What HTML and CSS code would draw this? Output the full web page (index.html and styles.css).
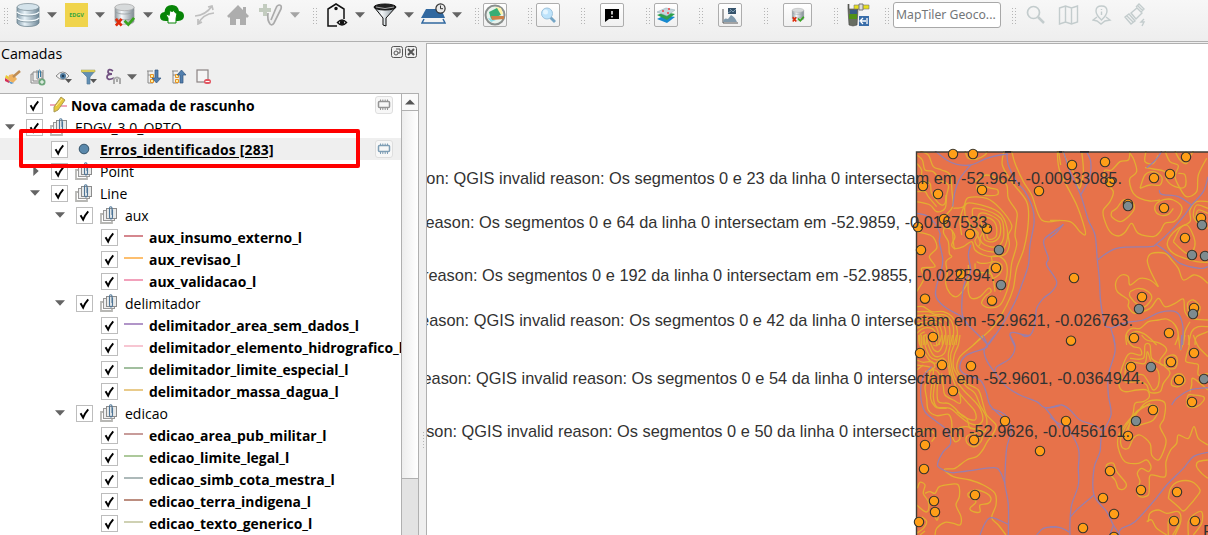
FILE: index.html
```html
<!DOCTYPE html>
<html lang="pt">
<head>
<meta charset="utf-8">
<title>QGIS</title>
<link rel="stylesheet" href="styles.css">
</head>
<body>
<svg class="defs" width="0" height="0">
  <linearGradient id="metal" x1="0" x2="1"><stop offset="0" stop-color="#8b979d"/><stop offset=".35" stop-color="#f5f8fa"/><stop offset="1" stop-color="#7d8a92"/></linearGradient>
  <linearGradient id="steel" x1="0" x2="1"><stop offset="0" stop-color="#839baa"/><stop offset=".35" stop-color="#e7f2f8"/><stop offset="1" stop-color="#6e8797"/></linearGradient>
  <symbol id="down" viewBox="0 0 10 6"><path d="M0 .3h10L5 5.7z" fill="#646464"/></symbol>
  <symbol id="right" viewBox="0 0 6 10"><path d="M.3 0v10L5.7 5z" fill="#646464"/></symbol>
  <symbol id="check" viewBox="0 0 16 16"><path d="M3.8 7.8 6.500 12.400Q8.500 7.500 12 3.600" fill="none" stroke="#000" stroke-width="2.1"/></symbol>
  <symbol id="group" viewBox="0 0 18 18"><path d="M3 8H1v9h11v-2" fill="none" stroke="#b7b7b4" stroke-width="1.800"/><rect x="3.500" y="4.500" width="11" height="10" fill="#eee" stroke="#999"/><rect x="6.500" y="2.500" width="10" height="10" fill="#e8eaea" stroke="#8c8c8c"/><path d="M12.500 3.500v7q0 2.500-1.500 2.500T9.500 10.500v-8Q9.500.7 10.700.7T12 2v7" fill="none" stroke="#4d7496" stroke-width="1.100"/></symbol>
  <symbol id="chip" viewBox="0 0 18 18"><rect x=".5" y=".5" width="17" height="17" rx="2.500" fill="#f7f7f7" stroke="#dedede"/><g fill="none" stroke="currentColor"><rect x="3.500" y="5.500" width="11" height="6" rx="1" stroke-width="1.500"/><path d="M5.500 3.500v2m2.300-2v2m2.400-2v2m2.300-2v2M5.500 12v2m2.300-2v2m2.400-2v2m2.300-2v2"/></g></symbol>
  <symbol id="db" viewBox="0 0 24 24"><path d="M1 4v16q2 3.500 11 3.500T23 20V4z" fill="url(#steel)" stroke="#708591" stroke-width=".8"/><path d="M1 9q2 3 11 3t11-3M1 15q2 3 11 3t11-3" fill="none" stroke="#f4fafc" stroke-width="1.600"/><path d="M1 10q2 3 11 3t11-3M1 16q2 3 11 3t11-3" fill="none" stroke="#718894" stroke-width=".8"/><ellipse cx="12" cy="4" rx="11" ry="3.500" fill="#d4e3eb" stroke="#82939c" stroke-width=".8"/></symbol>
  <symbol id="dbx" viewBox="0 0 24 24"><path d="M2 4v15q2 3 10 3t10-3V4z" fill="url(#metal)" stroke="#aaa" stroke-width=".6"/><path d="M2 8q2 3 10 3t10-3M2 14q2 3 10 3t10-3" fill="none" stroke="#969c9e" stroke-width=".8"/><ellipse cx="12" cy="4" rx="10" ry="3.500" fill="#d7dadb" stroke="#aaa" stroke-width=".8"/><path d="m3 16 6 7m0-7-6 7" stroke="#df2c0b" stroke-width="2.800"/><path d="m12 18 4 4 6-7" fill="none" stroke="#37a51d" stroke-width="2.800"/></symbol>
</svg>

<header class="toolbar">
  <i class="handle ml3"></i>
  <svg class="ml8" width="24" height="24"><use href="#db"/></svg>
  <svg class="ml7" width="10" height="6"><use href="#down"/></svg>
  <span class="edgv ml8">EDGV</span>
  <svg class="ml7" width="10" height="6"><use href="#down"/></svg>
  <svg class="ml8" width="23" height="24"><use href="#dbx"/></svg>
  <svg class="ml7" width="10" height="6"><use href="#down"/></svg>
  <svg class="ml7" width="24" height="20" viewBox="0 0 24 20"><path d="M6 16Q0 16 0 11.500 0 7.500 4.500 7 5 0 12 0q6 0 7 6 5 .5 5 5t-6 5z" fill="#078407"/><path d="M8 18v-5l-2-3 2-.5 1 1 1-5 2 1 2-1 1 2 2 1-1 5v4.500z" fill="#fff" stroke="#078407"/></svg>
  <svg class="ml11" width="20" height="20" viewBox="0 0 20 20" fill="none" stroke="#bfbfbf" stroke-width="1.700"><path d="M0 11Q11 10 17 1m-4 1 4-1 1 4M3 19Q8 9 19 8M3 14v5l4-2"/></svg>
  <svg class="ml12" width="22" height="22" viewBox="0 0 22 22"><path d="M11 1 0 12l2 2 1-1v8h6v-6h4v6h6v-8l1 1 2-2-3-3V3h-3v3z" fill="#adadad"/></svg>
  <svg class="ml10" width="25" height="24" viewBox="0 0 25 24"><path d="M4 1h4v4h4v4H8v4H4V9H0V5h4z" fill="#c3ccbf"/><path d="M9 10Q8 17 11 21q2 2 4-1l7-14q1-4-1.500-4T17 5l-5 12" fill="#eee" stroke="#aaa" stroke-width="1.700"/></svg>
  <svg class="ml6 dim" width="10" height="6"><use href="#down"/></svg>
  <i class="handle ml12"></i>
  <svg class="ml9" width="22" height="24" viewBox="0 0 22 24" fill="none" stroke="#111" stroke-width="1.500"><path d="M11 23H2V6l8-5 8 5v10"/><circle cx="10" cy="5.500" r="1" fill="#111"/><path d="M11.500 19.500q4.500-5 9 0-4.500 5-9 0z" fill="#fff"/><circle cx="16" cy="19.500" r="1.500" fill="#111"/></svg>
  <svg class="ml7" width="10" height="6"><use href="#down"/></svg>
  <svg class="ml8" width="24" height="24" viewBox="0 0 24 24"><path d="m1 4 9 11v7l3 1v-8L23 4z" fill="url(#metal)" stroke="#111"/><ellipse cx="12" cy="4" rx="11" ry="3" fill="#222" stroke="#111"/><path d="M3 4q9 3 18 0" stroke="#aaa" fill="none"/></svg>
  <svg class="ml7" width="10" height="6"><use href="#down"/></svg>
  <svg class="ml7" width="25" height="24" viewBox="0 0 25 24"><path d="M5 6h15l4 9H0z" fill="#31689f"/><path d="m3 16-2 4h23l-2-4" fill="none" stroke="#31689f" stroke-width="1.500"/><circle cx="19.500" cy="5.500" r="4.600" fill="#e9e9e9" stroke="#333" stroke-width="1.200"/><path d="M19.500 2.500v3.200h2.500" fill="none" stroke="#333"/></svg>
  <svg class="ml6" width="10" height="6"><use href="#down"/></svg>
  <i class="handle ml12"></i>
  <span class="tool ml4"><svg width="22" height="22" viewBox="0 0 22 22"><circle cx="11" cy="11" r="9.500" fill="#e8f3ed" stroke="#8a8f8d" stroke-width="2"/><path d="m11 3 6 1 2 6-3 1z" fill="#fff2a7"/><path d="m5 8 8-4 4 7-10 4z" fill="#36ad75"/><path d="m4 14 3 4 5-2z" fill="#8bdde7"/><path d="m7 12 13 0v3l-12 1z" fill="#cc8149"/></svg></span>
  <i class="handle ml20"></i>
  <span class="tool ml4"><svg width="18" height="18" viewBox="0 0 18 18"><path d="m11 11 5 5" stroke="#75a5c5" stroke-width="2.800"/><circle cx="8" cy="7.500" r="5.500" fill="#bde3fb" stroke="#9fc3dc"/><circle cx="6.500" cy="6" r="2.500" fill="#e4f5ff"/></svg></span>
  <i class="handle ml20"></i>
  <span class="tool ml15"><svg width="14" height="14" viewBox="0 0 14 14"><path d="M0 1h14v10H4l-4 3z" fill="#000"/><path d="M7 3v3.500M7 8v1.500" stroke="#fff" stroke-width="1.500"/></svg></span>
  <i class="handle ml21"></i>
  <span class="tool ml4"><svg width="20" height="18" viewBox="0 0 20 18"><path d="m1 13 8-4 10 2-8 6z" fill="#1688ce"/><path d="m1 9 8-3 10 2-8 6z" fill="#2da04b"/><path d="m1 6 9-4 9 2-8 6z" fill="#c5d5dc" stroke="#8ca4b0" stroke-width=".5"/><path d="M6 5h2m4-2h2m-3 4h2" stroke="#e44" stroke-width="1.500"/></svg></span>
  <i class="handle ml20"></i>
  <span class="tool ml15"><svg width="16" height="18" viewBox="0 0 16 18"><path d="M1 3v14h15" fill="none" stroke="#555"/><path d="M1 16q1-5 5-3l3-4q4 2 6 7z" fill="#829bad"/><path d="M6 2h8v6H6z" fill="#36536b"/><path d="m8 3 3 3 3-3M6 7l3-2" stroke="#7d9bb1" fill="none"/></svg></span>
  <i class="handle ml21"></i>
  <span class="tool wide ml15"><svg width="14" height="16"><use href="#dbx"/></svg></span>
  <i class="handle ml21"></i>
  <svg class="ml9" width="23" height="24" viewBox="0 0 23 24"><path d="M2 1v5h9l-1 16-4 1-4-1L1 6V1" fill="#686d62" stroke="#444" stroke-width=".6"/><path d="M3 7h7v4H3z" fill="#375b89"/><path d="M2 11h8v5H2z" fill="#509118"/><path d="M7 2h15v4H7z" fill="#e6df1d" stroke="#777" stroke-width=".6"/><path d="M12 1h4v6h-4z" fill="#ddd" stroke="#777"/><path d="M12 13h10v10H12z" fill="#396da9"/><path d="M20 15v6m-1-3h-5m2-3-3 3 3 3" stroke="#fff" fill="none" stroke-width="1.300"/></svg>
  <i class="handle ml14"></i>
  <span class="search ml4">MapTiler Geoco...</span>
  <i class="handle ml10"></i>
  <svg class="ml10 pale" width="20" height="20" viewBox="0 0 20 20"><circle cx="7.500" cy="7.500" r="6" stroke-width="1.700"/><path d="m12 12 6 6" stroke-width="2.500"/></svg>
  <svg class="ml12 pale" width="22" height="20" viewBox="0 0 22 20"><path d="m1.500 3 6-2 6 2 6-2v16l-6 2-6-2-6 2zm6-2v16m6-14v16"/></svg>
  <svg class="ml12 pale" width="20" height="20" viewBox="0 0 20 20"><path d="M9.500 15Q4 10 4 6q0-5 5.500-5T15 6q0 4-5.500 9zM9.500 4v1m0 1.500V10M5 12l-4 3 4 1 4 3 4-3 5-1-4-3"/></svg>
  <svg class="ml12 pale" width="24" height="24" viewBox="0 0 24 24"><path d="m7 10 6-5 5 5-6 6zM12 4l3-3 5 5-3 3M1 14l4-3 6 7-4 3zm2-1 6 6M14 3l5 5M20 16l-3 3h3l-2 4"/></svg>
</header>

<main class="workspace">
  <aside class="panel">
    <div class="title"><span>Camadas</span>
      <svg width="12" height="12" viewBox="0 0 12 12" fill="none" stroke="#555"><rect x=".5" y=".5" width="11" height="11" rx="2"/><circle cx="5" cy="7" r="2"/><path d="M5 3h4v4H7"/></svg>
      <svg width="12" height="12" viewBox="0 0 12 12" fill="none" stroke="#555"><rect x=".5" y=".5" width="11" height="11" rx="2"/><path d="m3 3 6 6m0-6L3 9" stroke-width="2"/></svg>
    </div>
    <div class="actions">
      <svg class="ml5" width="17" height="16" viewBox="0 0 17 16"><path d="m1 6 5 3-2 2-4-2z" fill="#e9cb36"/><path d="m0 9 5 3-1 2-4-2z" fill="#d62f58"/><path d="m4 6 4-1 4 5-4 4-5-3z" fill="#efb25f"/><path d="m8 8 7-6" stroke="#bf8d53" stroke-width="2.500"/><path d="m3 12 6 2-3 1z" fill="#5794cb"/></svg>
      <svg class="ml8" width="16" height="17" viewBox="0 0 16 17"><path d="M3 5H1v9h8M5 3H3v9h9V3H5M7 1v9h6V1" fill="none" stroke="#888"/><path d="M8.500 9V3q0-2 1-2t1 2v5" fill="none" stroke="#397ba2"/><circle cx="12" cy="13" r="3.500" fill="#6fa77c"/><path d="M12 11v4m-2-2h4" stroke="#fff"/></svg>
      <svg class="ml9" width="18" height="16" viewBox="0 0 18 16"><path d="M1 7q7-8 13 0-6 7-13 0z" fill="#f3f3f3" stroke="#888"/><circle cx="8" cy="7" r="3" fill="#4d799e"/><circle cx="8" cy="7" r="1.200" fill="#203c55"/><path d="M10 10h7l-3.500 4z" fill="#555"/></svg>
      <svg class="ml8" width="17" height="16" viewBox="0 0 17 16"><path d="M0 2h14L9 8v7H6V8z" fill="#6290b5" stroke="#557b98" stroke-width=".7"/><path d="M0 1h14v2H0z" fill="#eedb50" stroke="#8f925f" stroke-width=".5"/><path d="M9 10h7l-3.500 4z" fill="#555"/></svg>
      <svg class="ml8" width="16" height="18" viewBox="0 0 16 18"><path d="M7 3Q2 0 2 4q0 2 4 2-5 0-5 3 0 4 7 1" fill="none" stroke="#715080" stroke-width="1.800"/><path d="M8 16v-5q3-3 6 0v5m-3-5v3" fill="none" stroke="#aaa" stroke-width="2"/></svg>
      <svg class="ml5" width="10" height="6"><use href="#down"/></svg>
      <svg class="ml9" width="16" height="16" viewBox="0 0 16 16"><path d="M1 2h6M2 2v12h5M2 6h3" fill="none" stroke="#888"/><path d="M4.500 5.500h3v3h-3zm0 5h3v3h-3z" fill="#fff2a0" stroke="#e79227"/><path d="M9 1h3v8h3l-4.500 5L6 9h3z" fill="#527fae" stroke="#31557c" stroke-width=".7"/></svg>
      <svg class="ml9" width="16" height="16" viewBox="0 0 16 16"><path d="M1 2h6M2 2v12h5M2 6h3" fill="none" stroke="#888"/><path d="M4.500 5.500h3v3h-3zm0 5h3v3h-3z" fill="#fff2a0" stroke="#e79227"/><path d="M9 14h3V6h3l-4.500-5L6 6h3z" fill="#527fae" stroke="#31557c" stroke-width=".7"/></svg>
      <svg class="ml9" width="16" height="16" viewBox="0 0 16 16"><rect x="1" y="1" width="11" height="12" fill="#f5f5f5" stroke="#8b8383" stroke-width="1.200"/><rect x="8" y="10" width="7" height="5" rx="2.500" fill="#e25661"/><path d="M9.500 12.500h4" stroke="#fff"/></svg>
    </div>
    <div class="treebox">
      <div class="tree">
        <div class="row layer"><i class="fold"></i><svg class="cb"><use href="#check"/></svg><svg class="ic" viewBox="0 0 18 18"><path d="M0 9h5l3-2 3 3h6" fill="none" stroke="#ea8ba7" stroke-width="1.500"/><path d="m4 11 7-10 4 3-7 10-4 2z" fill="#e7c83d" stroke="#a99955"/><path d="m6 10 6-7" stroke="#fff0a0"/></svg><b class="near">Nova camada de rascunho</b><svg class="chip"><use href="#chip"/></svg></div>
        <div class="row"><i class="fold"><svg width="10" height="6"><use href="#down"/></svg></i><svg class="cb"><use href="#check"/></svg><svg class="ic"><use href="#group"/></svg><span>EDGV_3.0_ORTO</span></div>
        <div class="row l1 selected"><i class="fold"></i><svg class="cb"><use href="#check"/></svg><svg class="ic" viewBox="0 0 18 18"><circle cx="9" cy="9" r="4.800" fill="#5a88ab" stroke="#35546b"/></svg><b class="current">Erros_identificados [283]</b><svg class="chip blue"><use href="#chip"/></svg></div>
        <div class="row l1"><i class="fold"><svg class="closed" width="6" height="10"><use href="#right"/></svg></i><svg class="cb"><use href="#check"/></svg><svg class="ic"><use href="#group"/></svg><span>Point</span></div>
        <div class="row l1"><i class="fold"><svg width="10" height="6"><use href="#down"/></svg></i><svg class="cb"><use href="#check"/></svg><svg class="ic"><use href="#group"/></svg><span>Line</span></div>
        <div class="row l2"><i class="fold"><svg width="10" height="6"><use href="#down"/></svg></i><svg class="cb"><use href="#check"/></svg><svg class="ic"><use href="#group"/></svg><span>aux</span></div>
        <div class="row l3"><i class="fold"></i><svg class="cb"><use href="#check"/></svg><i class="line c1"></i><b>aux_insumo_externo_l</b></div>
        <div class="row l3"><i class="fold"></i><svg class="cb"><use href="#check"/></svg><i class="line c2"></i><b>aux_revisao_l</b></div>
        <div class="row l3"><i class="fold"></i><svg class="cb"><use href="#check"/></svg><i class="line c3"></i><b>aux_validacao_l</b></div>
        <div class="row l2"><i class="fold"><svg width="10" height="6"><use href="#down"/></svg></i><svg class="cb"><use href="#check"/></svg><svg class="ic"><use href="#group"/></svg><span>delimitador</span></div>
        <div class="row l3"><i class="fold"></i><svg class="cb"><use href="#check"/></svg><i class="line c4"></i><b>delimitador_area_sem_dados_l</b></div>
        <div class="row l3"><i class="fold"></i><svg class="cb"><use href="#check"/></svg><i class="line c5"></i><b>delimitador_elemento_hidrografico_l</b></div>
        <div class="row l3"><i class="fold"></i><svg class="cb"><use href="#check"/></svg><i class="line c6"></i><b>delimitador_limite_especial_l</b></div>
        <div class="row l3"><i class="fold"></i><svg class="cb"><use href="#check"/></svg><i class="line c7"></i><b>delimitador_massa_dagua_l</b></div>
        <div class="row l2"><i class="fold"><svg width="10" height="6"><use href="#down"/></svg></i><svg class="cb"><use href="#check"/></svg><svg class="ic"><use href="#group"/></svg><span>edicao</span></div>
        <div class="row l3"><i class="fold"></i><svg class="cb"><use href="#check"/></svg><i class="line c8"></i><b>edicao_area_pub_militar_l</b></div>
        <div class="row l3"><i class="fold"></i><svg class="cb"><use href="#check"/></svg><i class="line c9"></i><b>edicao_limite_legal_l</b></div>
        <div class="row l3"><i class="fold"></i><svg class="cb"><use href="#check"/></svg><i class="line c10"></i><b>edicao_simb_cota_mestra_l</b></div>
        <div class="row l3"><i class="fold"></i><svg class="cb"><use href="#check"/></svg><i class="line c11"></i><b>edicao_terra_indigena_l</b></div>
        <div class="row l3"><i class="fold"></i><svg class="cb"><use href="#check"/></svg><i class="line c12"></i><b>edicao_texto_generico_l</b></div>
      </div>
      <div class="scroll"><div class="up"><svg width="10" height="6" viewBox="0 0 10 6"><path d="M0 5.500h10L5 .5z" fill="#555"/></svg></div><div class="thumb"></div></div>
    </div>
  </aside>
  <div class="splitter"><i></i></div>
  <section class="canvas">
    <svg id="map" width="781" height="491" viewBox="427 44 781 491">
      <clipPath id="extent"><rect x="916" y="151" width="292" height="384"/></clipPath>
      <rect x="916" y="152" width="300" height="400" fill="#e7724a"/>
      <g id="lines" clip-path="url(#extent)"></g>
      <path d="M916.500 545V152H1208" fill="none" stroke="#3f3b35" stroke-width="1.400"/>
      <path d="M1005 152h6m48 0h3m18 0h9" stroke="#333" stroke-width="2"/>
      <g id="dots"></g>
      <g class="labels">
        <text x="1122" y="184">on: QGIS invalid reason: Os segmentos 0 e 23 da linha 0 intersectam em -52.964, -0.00933085.</text>
        <text x="992" y="228">reason: Os segmentos 0 e 64 da linha 0 intersectam em -52.9859, -0.0167533.</text>
        <text x="995" y="281">reason: Os segmentos 0 e 192 da linha 0 intersectam em -52.9855, -0.022594.</text>
        <text x="1133" y="326">eason: QGIS invalid reason: Os segmentos 0 e 42 da linha 0 intersectam em -52.9621, -0.026763.</text>
        <text x="1144.500" y="384">eason: QGIS invalid reason: Os segmentos 0 e 54 da linha 0 intersectam em -52.9601, -0.0364944.</text>
        <text x="1130" y="437">son: QGIS invalid reason: Os segmentos 0 e 50 da linha 0 intersectam em -52.9626, -0.0456161.</text>
        <text x="1214" y="537">P</text>
      </g>
    </svg>
  </section>
</main>
<div class="callout"></div>
<script src="map.js"></script>
</body>
</html>
```
FILE: styles.css
```css
* { box-sizing: border-box; }
body { margin: 0; width: 1208px; height: 535px; overflow: hidden; background: #efefef; color: #000; font: 14.2px "Open Sans", "Noto Sans", sans-serif; display: flex; flex-direction: column; }
svg { display: block; flex: none; }
.defs { position: absolute; }
.toolbar { flex: none; height: 42px; padding-bottom: 11px; display: flex; align-items: center; background: linear-gradient(#f7f7f7, #eee); border-bottom: 1px solid #b0b0b0; }
.handle { flex: none; width: 5px; height: 17px; background: radial-gradient(circle, #b5b5b5 .7px, transparent 1px) 0 0 / 3px 3px; }
.edgv { flex: none; width: 23px; height: 24px; background: #f0d44c; color: #35a63b; font: bold 5.5px/24px "Open Sans", sans-serif; text-align: center; }
.dim { opacity: .55; }
.tool { flex: none; width: 24px; height: 24px; border: 1px solid #adadad; border-radius: 2px; background: linear-gradient(#fff, #f0f0f0); display: flex; align-items: center; justify-content: center; }
.tool.wide { width: 29px; }
.search { flex: none; width: 108px; height: 26px; border: 1px solid #a8a8a8; border-radius: 3px; background: #fff; color: #737679; font: 12.2px/24px "Noto Sans", sans-serif; padding-left: 2px; white-space: nowrap; }
.pale { fill: none; stroke: #c3cccd; stroke-width: 1.4; }
.ml3 { margin-left: 3px; } .ml4 { margin-left: 4px; } .ml5 { margin-left: 5px; } .ml6 { margin-left: 6px; } .ml7 { margin-left: 7px; } .ml8 { margin-left: 8px; } .ml9 { margin-left: 9px; } .ml10 { margin-left: 10px; } .ml11 { margin-left: 11px; } .ml12 { margin-left: 12px; } .ml14 { margin-left: 14px; } .ml15 { margin-left: 15px; } .ml20 { margin-left: 20px; } .ml21 { margin-left: 21px; }

.workspace { flex: 1; min-height: 0; display: flex; }
.panel { width: 419px; display: flex; flex-direction: column; }
.title { height: 24px; padding: 0 2px 2px 1px; display: flex; align-items: center; gap: 2px; }
.title span { flex: 1; }
.title svg { margin-top: -2px; }
.actions { height: 27px; padding: 0 0 5px 0; display: flex; align-items: center; }
.treebox { flex: 1; min-height: 0; display: flex; border-top: 1px solid #b0b0b0; border-right: 1px solid #b0b0b0; background: #fff; }
.tree { flex: 1; min-width: 0; overflow: hidden; }
.row { height: 22px; display: flex; align-items: center; padding-left: 5px; white-space: nowrap; font-size: 14px; }
.row.l1 { padding-left: 30px; } .row.l2 { padding-left: 55px; } .row.l3 { padding-left: 80px; }
.row.selected { background: #efefef; }
.fold { flex: none; width: 21px; height: 10px; display: flex; align-items: center; }
.closed { margin-left: 3px; }
.cb { width: 17px; height: 17px; border: 1px solid #bdbdbd; background: #fff; }
.ic { width: 18px; height: 18px; margin-left: 7px; margin-right: 7px; }
.row b { font-weight: 700; font-size: 13.9px; }
.near { margin-left: -4px; }
.row b.current { text-decoration: underline; text-underline-offset: 2px; letter-spacing: .22px; }
.chip { width: 18px; height: 18px; margin-left: auto; margin-right: 8px; color: #949494; }
.chip.blue { color: #7f9eb5; }
.line { flex: none; width: 19px; height: 2px; margin: -2px 6px 0 6px; }
.c1 { background: #d5878e; } .c2 { background: #fdbf6f; } .c3 { background: #f2a1bb; } .c4 { background: #b195c8; } .c5 { background: #f7c6d2; } .c6 { background: #a2bf9f; } .c7 { background: #e9cb8b; } .c8 { background: #c89c9a; } .c9 { background: #adc99b; } .c10 { background: #adb9b9; } .c11 { background: #bc8e80; } .c12 { background: #cfd1b3; }
.scroll { flex: none; width: 17px; border-left: 1px solid #b0b0b0; background: #e3e3e3; display: flex; flex-direction: column; }
.up { height: 17px; background: #fafafa; border-bottom: 1px solid #b0b0b0; display: grid; place-items: center; }
.thumb { height: 368px; border-bottom: 1px solid #b0b0b0; background: linear-gradient(90deg, #ededed, #fff); }
.splitter { width: 7px; display: flex; align-items: center; padding-left: 3px; }
.splitter i { width: 3px; height: 17px; margin-top: 302px; background: radial-gradient(circle, #b5b5b5 .7px, transparent 1px) 0 0 / 3px 3px; }
.canvas { flex: 1; margin-top: 1px; border-top: 1px solid #b0b0b0; border-left: 1px solid #b0b0b0; background: #fff; overflow: hidden; }
.labels { font: 16.37px "Liberation Sans", sans-serif; fill: #323232; text-anchor: end; }
.contour, .river { fill: none; stroke-width: 1.3; stroke-linejoin: round; }
.contour { stroke: #e3ae32; }
.river { stroke: #987fae; }
.dot { stroke: #35332b; stroke-width: 1.1; }
.dot.orange { fill: #ff9e17; }
.dot.gray { fill: #7d8b8f; }
.callout { position: absolute; left: 19px; top: 129px; width: 341px; height: 39px; border: 4px solid #f00; border-radius: 2px; }
```
FILE: map.js
```js
// Coordinates are stored per map tile, in thirds of a pixel from the tile origin.
const tiles = {
  A: { x: 900, y: 145,
    orange: "159,27 219,27 69,123 114,147 246,135 417,138 132,222 54,246 210,267 261,251 63,315 288,369 183,387 75,461 276,467 99,576",
    gray: "297,315 303,420",
    river: [
      "105,18 140,45 170,58 212,60 260,40 300,30 325,28",
      "212,60 180,100 165,140 158,185",
      "320,15 325,60 350,110 375,140 398,190 402,235 390,300 385,360 365,420 350,460 330,500 300,550 265,600",
      "50,205 80,212 105,235 120,265 118,290 128,340 125,370 108,430 110,460 140,490 185,515 205,540 240,575 262,598",
      "212,300 205,330 212,380 195,410 187,450 187,510 205,540",
      "490,238 475,250 435,280 432,300 445,340 440,360 470,410 455,440 430,460 410,490 405,530 390,570 340,562 330,570 340,595 345,605"],
    contour: [
      "312,18 307,60 335,110 380,170 385,230 372,310 350,370 340,430 320,480 280,545 220,600",
      "335,18 345,55 370,110 395,150 425,225 480,226",
      "475,18 479,40 482,60",
      "50,30 67,45 75,75 100,80 120,105 145,120 140,150 135,190 110,200 90,180 50,170",
      "60,18 85,30 100,65 125,75 150,90 156,140 158,185 135,215 130,245 155,255 160,290 165,310 190,305 215,290 225,315 250,330 280,335 315,328 328,300 325,270 335,240 300,190 260,160 205,158 190,185 160,190",
      "50,55 65,75 65,105 90,115 95,145 120,178 135,175 138,150",
      "50,140 75,140 85,155 110,185",
      "195,210 200,175 260,185 300,205 320,245 320,290 300,320 250,315 225,290 235,265 215,245 195,210",
      "218,215 220,190 255,195 290,210 308,230 310,280 290,305 255,300 240,280 248,260 232,240 218,215",
      "232,228 240,205 270,210 298,230 300,270 280,290 255,285 250,265",
      "245,240 245,220 270,220 288,240 288,275 265,282 258,260 245,240",
      "185,270 180,225 190,190 200,175",
      "205,262 215,240 240,290 235,305",
      "155,255 165,275 155,300 165,313",
      "145,225 130,260 145,290 148,325 155,335 138,350 142,385 137,415 150,445 170,455 190,435 205,405 205,360",
      "205,395 205,440 215,460 240,455 265,430 273,440 255,455 245,475 265,488 300,480 320,440 330,400 335,355 350,300 345,270 350,225 350,200 325,160 320,120 290,100 260,90 240,100 225,110",
      "230,350 245,355 275,350 275,335 300,335 320,360 318,405 300,440",
      "275,390 268,370 280,350 305,360 300,385 280,400 275,390",
      "225,355 230,380 270,385 280,405 285,440",
      "50,260 90,270 105,285 110,310 88,335 105,365 65,370 72,400 50,440",
      "195,18 205,40 230,42 255,30 262,18",
      "230,135 235,120 275,130 293,135 290,150 250,150 230,135",
      "50,485 70,485 95,500 130,500 160,520 172,560 168,600",
      "50,500 85,500 105,508 140,512 160,545 158,600",
      "50,512 80,510 120,515 145,535 150,570 148,600",
      "50,525 80,520 115,525 135,550 138,600",
      "50,537 80,530 110,533 125,560 127,600",
      "50,550 75,540 105,542 115,565 118,600",
      "50,565 70,550 95,550 107,565 110,600",
      "60,600 60,570 75,560", "70,600 70,575 80,568", "78,600 80,580"] },
  B: { x: 1050, y: 145,
    orange: "66,60 165,51 408,36 312,99 360,87 180,111 234,177 342,189 453,219 405,279 72,399 276,456 432,489 63,587 252,579 357,564",
    gray: "234,183 456,240 426,330 465,333 267,492 429,507",
    river: [
      "40,18 60,80 92,150 115,225 135,270 142,345 148,400 152,470 165,540 182,550 195,600",
      "108,18 122,50 118,100 92,150",
      "142,345 200,310 300,305 318,298 360,260 400,215 425,180 460,140 474,95",
      "318,298 350,320 390,355 450,370 474,365",
      "425,180 385,155 335,148 328,135",
      "335,18 325,35 310,52 290,68",
      "182,550 230,532 280,525 330,502 380,502 398,540 398,600",
      "0,278 20,262 40,238"],
    contour: [
      "0,226 60,230 90,260 105,270 104,250 80,180 30,80 22,18",
      "38,18 52,50 75,90 88,130 100,80 95,18",
      "162,90 165,75 185,75 210,50 235,45 240,18",
      "240,25 252,45 260,80 240,100 240,120 250,145 270,160 300,168 330,165",
      "162,90 170,115 190,140 180,170 160,195 162,220 180,260 205,273 225,262 245,235 265,265 310,275 330,260 345,235 372,230 390,210 395,185 370,165 345,163 320,175 315,195 330,210 355,208 370,190",
      "185,200 200,190 220,165 245,170 253,190 235,215 210,230 185,215 185,200",
      "288,18 285,50 310,55 325,30",
      "345,18 360,50 385,62 375,95 390,130 410,155 440,140 445,90 470,40",
      "375,18 390,45 410,55 420,35 430,18",
      "270,130 285,90 310,80 335,95 330,120 300,120 270,130",
      "285,68 310,72 345,80 350,105 375,125 405,125 405,90 385,85",
      "474,170 440,170 420,195 420,230 385,250 360,275 352,300 370,325 405,340 440,350 474,352",
      "474,190 440,180 430,210 440,230 474,250",
      "474,205 445,195 438,220 450,240",
      "370,290 390,250 410,240 425,260 435,290 430,315 410,325 385,305 370,290",
      "325,425 300,375 292,345 305,325 345,325 365,345 385,370 400,405 430,390 450,395 474,415",
      "325,425 300,405 270,400 240,420 235,395 215,390 198,410 202,440 235,465 235,485 255,505 300,490 325,460 345,485 375,475 400,462 405,500 425,520 474,525",
      "240,440 265,430 295,440 305,460 285,485 265,480 240,455 240,440",
      "415,500 413,475 430,465 450,485 445,510",
      "230,600 228,570 245,550 270,550 295,530 325,525 350,522 375,540 385,570 375,600",
      "240,590 238,575 255,560 280,565 300,580 320,600",
      "415,600 425,560 445,545 474,545","435,600 440,575 474,560",
      "400,600 405,560 420,530"] },
  C: { x: 900, y: 335,
    orange: "60,54 126,90 213,93 159,168 315,258 222,315 75,330 420,348 72,402 102,498 105,531 225,480 57,561",
    gray: "",
    river: [
      "248,0 262,30 255,40 200,60 180,90 190,115 240,135 258,170 270,210 300,240 325,260 335,285 320,340 315,420 315,450 325,510 325,600",
      "285,0 262,30 252,48 262,80 290,120 320,155 360,180 410,200 435,218 480,212",
      "435,218 460,250 480,280",
      "330,0 345,35 330,70 290,95 285,110",
      "365,0 378,5 392,0",
      "95,95 70,125 62,180 75,230 110,260 140,285 152,325 130,350 113,385 120,400 155,413 200,408 280,398 300,410 315,445",
      "275,222 300,230 320,245 335,285",
      "240,600 255,565 275,548 325,568",
      "410,600 430,580 470,575"],
    contour: [
      "250,0 220,30 180,65 170,100 180,120 200,145 235,165 250,210 260,240 288,270 280,295 262,320 248,345 230,365 200,375 165,400 133,403 160,425 210,435 250,450 285,475 288,510 275,548 295,570 318,600",
      "180,0 175,30 163,60 160,95 175,125 200,155 225,175 240,210 260,250 255,290 235,280 210,280 200,250 170,230",
      "170,0 162,30 152,60 155,95 165,130 190,165 215,190 240,220 248,255 230,270 200,260 175,240 150,220 110,215 100,185 105,140",
      "158,0 150,35 145,60 150,100 160,135 175,170 200,200 225,230 225,255 190,245 165,220 145,205 115,200 112,155 120,125 105,105 75,110",
      "145,0 140,35 133,55 115,65 100,60 85,30 78,0",
      "135,0 130,25 118,48 102,45 90,20",
      "125,0 120,20 110,32 100,30",
      "110,0 108,20", "72,0 75,30 90,65 110,75 130,70 145,95 150,135",
      "64,0 66,35 85,72 105,85 120,75", "56,0 58,25 70,48",
      "50,75 70,82 95,80 105,95 90,110 85,135 75,155 80,190 85,225 110,242 145,238 155,260 155,300",
      "50,90 85,95 100,105 95,150 92,190 105,215 120,220 140,220",
      "50,105 70,90",
      "125,115 130,155 135,180 160,195 180,205 180,180 170,155",
      "155,300 165,320 180,310 170,285 200,275 240,292 245,315 225,335 202,325 200,305 225,295 240,310",
      "60,295 80,280 105,300 95,320",
      "52,460 60,442 75,450 70,475 85,500 85,525 75,530 50,510",
      "75,475 90,470 105,475 118,455 150,448 175,450 178,485 168,510 183,545 180,570 160,565 135,562 110,580 105,600",
      "95,525 110,555 115,545",
      "205,485 205,475 225,465 260,475 273,490 265,505 240,510 240,530 220,530 210,520 228,500 205,485",
      "50,595 70,580 80,560 65,545","60,600 75,588"] },
  D: { x: 1050, y: 335,
    orange: "432,54 243,96 363,81 387,135 426,201 309,225 48,258 234,303 180,408 273,465 159,489 381,471 192,537 372,558 435,558 99,579 192,606",
    gray: "303,96 462,132 258,258",
    river: [
      "0,218 35,210 60,225 90,255 130,270 160,290",
      "0,245 25,265 50,275 85,340 85,400 85,450 65,510 60,560 60,600",
      "190,0 195,50 175,120 175,180 183,240 155,300 150,350 132,400 132,480 170,530 190,570 210,600",
      "132,480 85,520 62,545",
      "0,575 30,578 60,592", "190,570 180,600",
      "474,352 430,365 400,400 350,450 310,500 255,560 215,580 205,600",
      "365,210 380,190 420,165 474,158", "395,0 393,45"],
    contour: [
      "230,0 235,20 250,35 270,40 273,60 240,55 225,75 210,120 208,155 225,170 260,165 290,165 298,185 280,200 255,205 248,240 225,270 205,305 205,340 225,380 265,385 290,375 303,395 295,410 275,400 262,415 270,440 260,465 270,485 295,480 298,450 302,420 345,425 348,380 362,345 380,325 385,300 415,310 432,275 445,310 474,330",
      "240,70 280,70 285,30 300,30 305,70 330,85 345,95 360,115 340,145 330,170 300,172 290,150 270,140 225,140 210,115",
      "225,120 230,85 255,82 285,85 292,50 305,85 325,110 325,150 310,165 300,150 280,120 255,120",
      "275,0 290,15 330,25 350,45 330,75 335,90 350,90",
      "345,95 345,70 370,60 382,75 375,100 350,100",
      "415,0 418,30 410,60 408,80 430,85 445,90 445,120 474,115",
      "385,0 392,45 405,0",
      "365,135 375,120 395,118 405,140 385,155 365,150 365,135",
      "410,200 415,180 430,180 460,185 460,198 440,215 415,215 410,200",
      "420,170 425,150 430,130 474,165", "430,0 445,35 474,65",
      "225,310 230,285 250,250 285,205 320,195 345,205 342,250 330,275 348,315 340,350 325,375 305,360 300,325 270,300 250,310 235,340 215,335 215,300 240,255 265,225 300,205",
      "235,285 245,250 275,220 310,210 325,225 310,255 285,265 255,275",
      "170,410 170,390 190,385 200,410 228,445 222,462 205,460 195,435 170,410",
      "355,490 362,460 385,440 425,440 450,465 440,485 415,515 400,528 385,515 355,490",
      "295,560 300,535 325,525 350,535 385,530 392,560 375,600",
      "290,560 305,555 320,580 350,600",
      "355,600 355,560 365,545 385,550 385,570 368,600",
      "415,600 415,560 430,540 455,530 455,565 430,600",
      "474,375 445,380 440,395 455,415 474,430"] }
};

const NS = "http://www.w3.org/2000/svg";
const add = (parent, name, attrs) => {
  const el = document.createElementNS(NS, name);
  for (const key in attrs) el.setAttribute(key, attrs[key]);
  document.getElementById(parent).appendChild(el);
};
const parse = (text, tile) => text.split(" ").filter(Boolean).map(pair => {
  const [x, y] = pair.split(",");
  return [tile.x + x / 3, tile.y + y / 3];
});
// Catmull-Rom spline converted to cubic Bezier segments.
const smooth = p => {
  let d = `M${p[0]}`;
  for (let i = 0; i < p.length - 1; i++) {
    const a = p[i - 1] || p[i], b = p[i], c = p[i + 1], e = p[i + 2] || c;
    d += `C${b[0] + (c[0] - a[0]) / 6},${b[1] + (c[1] - a[1]) / 6} ${c[0] - (e[0] - b[0]) / 6},${c[1] - (e[1] - b[1]) / 6} ${c}`;
  }
  return d;
};
for (const kind of ["contour", "river"])
  for (const tile of Object.values(tiles))
    for (const line of tile[kind]) add("lines", "path", { class: kind, d: smooth(parse(line, tile)) });
for (const color of ["orange", "gray"])
  for (const tile of Object.values(tiles))
    for (const [cx, cy] of parse(tile[color], tile)) add("dots", "circle", { class: `dot ${color}`, cx, cy, r: 4.7 });
```
